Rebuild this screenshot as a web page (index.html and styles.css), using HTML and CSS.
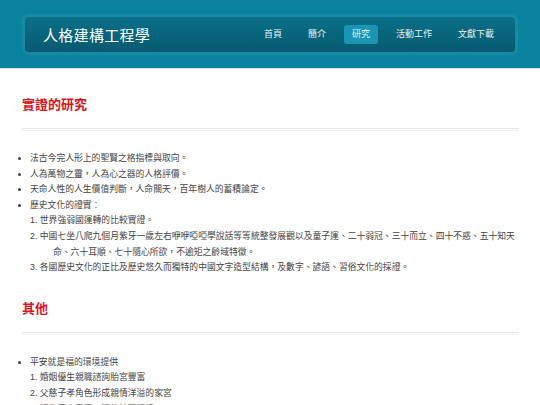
FILE: index.html
```html
<!DOCTYPE html>
<html lang="zh-Hant">

<head>
    <meta charset="UTF-8">
    <meta name="viewport" content="width=device-width, initial-scale=1.0">
    <title>人格建構工程學 - 研究</title>
    <link rel="stylesheet" href="styles.css">
</head>

<body>

    <!-- 頂部 -->
    <div class="header">
        <div class="headerBar">
            <h1 class="logo">人格建構工程學</h1>
            <ul class="nav">
                <li><a href="#">首頁</a></li>
                <li><a href="#">簡介</a></li>
                <li><a href="#" class="active">研究</a></li>
                <li><a href="#">活動工作</a></li>
                <li><a href="#">文獻下載</a></li>
            </ul>
        </div>
    </div>

    <!-- 內容 -->
    <div class="content">
        <h2 class="title">實證的研究</h2>
        <div class="line"></div>
        <ul class="list">
            <li>法古今完人形上的聖賢之格指標與取向。</li>
            <li>人為萬物之靈，人為心之器的人格評價。</li>
            <li>天命人性的人生價值判斷，人命關天，百年樹人的蓄積論定。</li>
            <li>歷史文化的證實：
                <ol class="subList">
                    <li>世界強弱國運轉的比較實證。</li>
                    <li>中國七坐八爬九個月紫牙一歲左右咿咿啞啞學說話等等統整發展觀以及童子運、二十弱冠、三十而立、四十不惑、五十知天命、六十耳順、七十隨心所欲，不逾矩之齡域特徵。</li>
                    <li>各國歷史文化的正比及歷史悠久而獨特的中國文字造型結構，及數字、諺語、習俗文化的採證。</li>
                </ol>
            </li>
        </ul>

        <h2 class="title">其他</h2>
        <div class="line"></div>
        <ul class="list">
            <li>平安就是福的環境提供
                <ol class="subList">
                    <li>婚姻優生親職諮詢胎宮豐富</li>
                    <li>父慈子孝角色形成親情洋溢的家宮</li>
                    <li>近先喜來重召三環的社區環境</li>
                </ol>
            </li>
        </ul>
    </div>

</body>

</html>
```

FILE: styles.css
```css
body {
    margin: 0;
    background: #fff;
    font-family: "Liberation Sans", "Noto Sans CJK TC", sans-serif;
    color: #444;
}

ul,
ol {
    margin: 0;
    padding: 0;
}

/* 頂部 */
.header {
    height: 69px;
    background: #0a83a0;
    border-bottom: 1px solid #cfe7ed;
    padding-top: 17px;
    box-sizing: border-box;
}

.header .headerBar {
    margin: 0 25px;
    height: 35px;
    padding: 0 13px 0 18px;
    display: flex;
    align-items: center;
    justify-content: space-between;
    background: linear-gradient(#0b7089, #065a6f);
    border-radius: 4px;
    box-shadow: 0 0 0 3px rgba(255, 255, 255, .06);
}

.header .logo {
    margin: 0;
    font-size: 15px;
    font-weight: normal;
    color: #fff;
    letter-spacing: 0.3px;
}

.header .nav {
    list-style: none;
    display: flex;
    gap: 10px;
}

.header .nav a {
    display: block;
    height: 19px;
    line-height: 19px;
    padding: 0 8px;
    font-size: 9px;
    color: #e6f3f6;
    text-decoration: none;
    border-radius: 3px;
}

.header .nav a.active {
    background: #1b95b4;
}

/* 內容 */
.content {
    padding: 28px 21px 0 22px;
}

.content .title {
    margin: 0;
    height: 16px;
    line-height: 16px;
    font-size: 13px;
    color: #e0101c;
}

.content .title+.line {
    margin-top: 15px;
}

.content .line {
    height: 1px;
    border-top: 1px solid #e6e6e6;
    border-bottom: 1px solid #f2f2f2;
}

.content .list {
    margin: 20px 0 25px;
    padding-left: 8px;
    font-size: 8.8px;
    line-height: 15.6px;
}

.content .subList {
    list-style-position: inside;
}

.content .subList li {
    padding-left: 23px;
    text-indent: -23px;
}
```
